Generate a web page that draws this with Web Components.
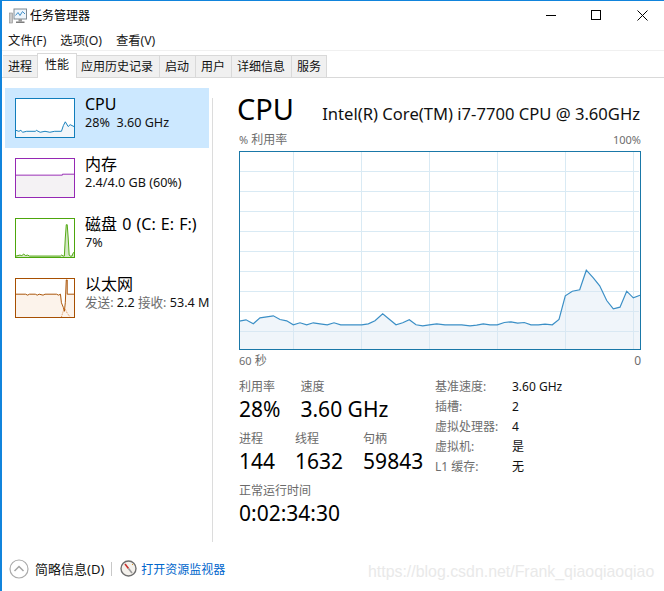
<!DOCTYPE html>
<html lang="zh">
<head>
<meta charset="utf-8">
<title>任务管理器</title>
<style>
  html, body { margin: 0; padding: 0; background: #fff; }
  body { font-family: "Noto Sans", "Noto Sans CJK SC", sans-serif; font-size: 12px; color: #000; overflow: hidden; }
</style>
</head>
<body>
<task-window>
  <win-titlebar slot="title">任务管理器</win-titlebar>
  <win-menu slot="menu"><span>文件(F)</span><span>选项(O)</span><span>查看(V)</span></win-menu>
  <win-tabs slot="tabs" active="1" items="进程,性能,应用历史记录,启动,用户,详细信息,服务"></win-tabs>
  <perf-side slot="side">
    <perf-item kind="cpu" selected name="CPU">28%&nbsp; 3.60 GHz</perf-item>
    <perf-item kind="mem" name="内存">2.4/4.0 GB (60%)</perf-item>
    <perf-item kind="disk" name="磁盘 0 (C: E: F:)">7%</perf-item>
    <perf-item kind="net" name="以太网"><span class="dim">发送:</span> 2.2 <span class="dim">接收:</span> 53.4 M</perf-item>
  </perf-side>
  <perf-panel slot="panel"></perf-panel>
  <win-footer slot="footer"></win-footer>
</task-window>

<script>
class TaskWindow extends HTMLElement {
    connectedCallback() {
        this.attachShadow({ mode: 'open' });
        this.shadowRoot.innerHTML = `
            <style>
                :host {
                    display: flex;
                    flex-direction: column;
                    width: 664px;
                    height: 591px;
                    box-sizing: border-box;
                    border-top: 1px solid #1184dc;
                    border-left: 2px solid #1184dc;
                    position: relative;
                    overflow: hidden;
                }
                .main { display: flex; height: 464px; flex: none; }
                .mark {
                    position: absolute;
                    left: 366px;
                    top: 561px;
                    font: 15.9px/20px "Liberation Sans", sans-serif;
                    color: #e9e9e9;
                    white-space: nowrap;
                }
            </style>
            <slot name="title"></slot>
            <slot name="menu"></slot>
            <slot name="tabs"></slot>
            <div class="main">
                <slot name="side"></slot>
                <slot name="panel"></slot>
            </div>
            <slot name="footer"></slot>
            <div class="mark">https://blog.csdn.net/Frank_qiaoqiaoqiao</div>
        `;
    }
}

class WinTitlebar extends HTMLElement {
    connectedCallback() {
        this.attachShadow({ mode: 'open' });
        this.shadowRoot.innerHTML = `
            <style>
                :host { display: flex; align-items: center; height: 29px; padding-left: 7px; flex: none; }
                .icon { width: 18px; height: 16px; margin-right: 3px; }
                .text { flex: 1; font-size: 12px; color: #000; position: relative; top: -1px; }
                .ctl { display: flex; margin-right: -1px; }
                .ctl div { width: 45.5px; height: 29px; display: flex; align-items: center; justify-content: center; }
            </style>
            <svg class="icon" viewBox="0 0 18 16">
                <rect x="0.5" y="5" width="3" height="10" fill="#c9c9c9" stroke="#8a8a8a" stroke-width=".6"/>
                <rect x="5" y="1" width="12.5" height="10" fill="#eef5fb" stroke="#7f8a92"/>
                <path d="M6.5 7.5 9 4.5 11 7.5 13.5 3.5 16 6" fill="none" stroke="#3f8fc9" stroke-width="1"/>
                <rect x="9.5" y="11" width="3.5" height="2.5" fill="#9a9a9a"/>
                <rect x="7" y="13.5" width="8.5" height="1.5" fill="#7d7d7d"/>
            </svg>
            <span class="text"><slot></slot></span>
            <div class="ctl">
                <div><svg width="11" height="11" viewBox="0 0 11 11"><path d="M0 5.5H10" stroke="#000" stroke-width="1"/></svg></div>
                <div><svg width="11" height="11" viewBox="0 0 11 11"><rect x=".5" y=".5" width="9" height="9" fill="none" stroke="#000"/></svg></div>
                <div><svg width="11" height="11" viewBox="0 0 11 11"><path d="M.5 .5 10.5 10.5M10.5 .5 .5 10.5" stroke="#000" stroke-width="1"/></svg></div>
            </div>
        `;
    }
}

class WinMenu extends HTMLElement {
    connectedCallback() {
        this.attachShadow({ mode: 'open' });
        this.shadowRoot.innerHTML = `
            <style>
                :host { display: flex; gap: 14px; height: 20px; padding-left: 6px; align-items: center; flex: none; border-bottom: 1px solid #f0f0f0; font-size: 12.3px; color: #1a1a1a; }
            </style>
            <slot></slot>
        `;
    }
}

class WinTabs extends HTMLElement {
    connectedCallback() {
        this.attachShadow({ mode: 'open' });
        const active = Number(this.getAttribute('active'));
        const tabs = this.getAttribute('items').split(',').map((t, i) =>
            `<div class="tab${i === active ? ' on' : ''}">${t}</div>`).join('');
        this.shadowRoot.innerHTML = `
            <style>
                :host { display: flex; height: 27px; box-sizing: border-box; padding: 3px 0 0 1px; border-bottom: 1px solid #d9d9d9; flex: none; }
                .tab {
                    height: 21px;
                    line-height: 21px;
                    margin-top: 1px;
                    padding: 0 6px 0 5px;
                    background: #f0f0f0;
                    border: 1px solid #d9d9d9;
                    border-bottom: none;
                    border-left: none;
                    font-size: 12px;
                    color: #111;
                    white-space: nowrap;
                }
                .tab:first-child { border-left: 1px solid #d9d9d9; padding: 0 2px 0 7px; }
                .tab:last-child { padding-right: 5px; }
                .on {
                    height: 24px;
                    margin: -1px -1px -1px -2px;
                    padding: 0 7px;
                    background: #fff;
                    border-left: 1px solid #d9d9d9;
                    position: relative;
                }
            </style>
            ${tabs}
        `;
    }
}

class PerfSide extends HTMLElement {
    connectedCallback() {
        this.attachShadow({ mode: 'open' });
        this.shadowRoot.innerHTML = `
            <style>
                :host { display: block; width: 210px; box-sizing: border-box; padding: 10px 0 0 3px; flex: none; }
            </style>
            <slot></slot>
        `;
    }
}

// thumbnail points are read off the reference at 3x, relative to a 60x40 box
const THUMBS = {
    cpu: { color: '#117dbb', fill: '#f1f6fa', pts: '0,33 3,34 5,33 7,35 11,34 20,34 21,33 25,35 30,34 35,35 40,34 47,34 49,28 51,24 54,29 56,27 60,29' },
    mem: { color: '#9528b4', fill: '#f4f2f4', pts: '0,17 48,17 48,16 60,16' },
    disk: { color: '#4da60c', fill: '#d5e8c6', pts: '0,39 4,38 6,38.5 8,37 10,38.5 12,38 14,39 46,39 47,38 49,39 50,39 51,20 52,6 53,6 54,20 55,38 56,39 58,39 59,36 60,35' },
    net: { color: '#a74f01', fill: '#fcf3eb', pts: '0,16 10,16 12,17 14,16 20,16 22,17 24,16 28,17 30,16 42,16 44,17 46,16 47,25 49,30 50,34 51,25 52,1 53,1 53,16 60,16' }
};

class PerfItem extends HTMLElement {
    connectedCallback() {
        this.attachShadow({ mode: 'open' });
        const kind = this.getAttribute('kind');
        const t = THUMBS[kind];
        const extra = kind === 'net'
            ? `<polyline points="47,40 50,30 53,36 56,40" fill="none" stroke="#d98a4a" stroke-width="1" stroke-dasharray="1 1"/>` : '';
        this.shadowRoot.innerHTML = `
            <style>
                :host { display: flex; width: 204px; height: 60px; box-sizing: border-box; padding: 10px 0 0 10px; white-space: nowrap; }
                :host([selected]) { background: #cce8ff; }
                .thumb { width: 60px; height: 40px; flex: none; box-sizing: border-box; border: 1px solid ${t.color}; background: #fff; }
                .thumb svg { display: block; }
                .text { margin-left: 10px; margin-top: -5px; }
                .name { font-size: 16px; line-height: 22px; color: #000; word-spacing: 1px; }
                .sub { font-size: 12.6px; line-height: 16px; color: #111; }
                ::slotted(.dim) { color: #6d6d6d; }
            </style>
            <div class="thumb">
                <svg width="58" height="38" viewBox="0 0 60 40" preserveAspectRatio="none">
                    <polygon points="${t.pts} 60,40 0,40" fill="${t.fill}"/>
                    <polyline points="${t.pts}" fill="none" stroke="${t.color}" stroke-width="1"/>
                    ${extra}
                </svg>
            </div>
            <div class="text">
                <div class="name">${this.getAttribute('name')}</div>
                <div class="sub"><slot></slot></div>
            </div>
        `;
    }
}

class PerfGraph extends HTMLElement {
    connectedCallback() {
        this.attachShadow({ mode: 'open' });
        // measured from the reference at 3x
        const left = [[28,212],[48,208],[70,220],[90,202],[110,199],[130,196],[150,207],[170,211],[190,223],[210,217],[230,223],[250,217],[270,220],[292,223],[312,217],[332,223],[352,223],[372,223],[395,223],[415,220],[435,211],[458,190],[478,206],[498,223],[518,217],[538,208],[558,223],[578,226],[598,223],[620,220]]
            .map(([x, y]) => [230 + x / 3, 250 + y / 3]);
        const right = [[0,223],[50,223],[75,226],[95,224],[115,220],[135,223],[157,223],[178,216],[198,214],[218,218],[238,216],[258,223],[280,223],[300,221],[322,223],[342,207],[361,136],[382,122],[404,118],[424,59],[445,82],[464,106],[485,150],[505,175],[525,170],[545,122],[565,142],[585,134]]
            .map(([x, y]) => [445 + x / 3, 250 + y / 3]);
        const pts = left.concat(right).map(([x, y]) => `${(x - 239).toFixed(1)},${(y - 151 + 0.5).toFixed(1)}`).join(' ');
        const vs = [54, 122, 190, 258, 326, 394].map(x => `<path d="M${x + .5} 1V198"/>`).join('');
        const hs = [20, 40, 60, 80, 100, 120, 140, 160, 180].map(y => `<path d="M1 ${y + .5}H400"/>`).join('');
        this.shadowRoot.innerHTML = `
            <style>
                :host { display: block; width: 402px; height: 199px; }
                svg { display: block; }
            </style>
            <svg width="402" height="199" viewBox="0 0 402 199">
                <rect width="402" height="199" fill="#fff"/>
                <g stroke="#d9eaf4" stroke-width="1" fill="none">${vs}${hs}</g>
                <polygon points="${pts} 401,198 1,198" fill="#d9e7f2" fill-opacity=".4"/>
                <polyline points="${pts}" fill="none" stroke="#3b8fc6" stroke-width="1.2"/>
                <rect x=".5" y=".5" width="401" height="198" fill="none" stroke="#1a78a8"/>
            </svg>
        `;
    }
}

class StatCell extends HTMLElement {
    connectedCallback() {
        this.attachShadow({ mode: 'open' });
        this.shadowRoot.innerHTML = `
            <style>
                :host { display: block; white-space: nowrap; }
                .l { font-size: 12px; line-height: 16px; color: #6a6a6a; }
                .v { font-size: 21px; line-height: 28px; color: #000; }
            </style>
            <div class="l">${this.getAttribute('label')}</div>
            <div class="v">${this.getAttribute('value')}</div>
        `;
    }
}

class PerfPanel extends HTMLElement {
    connectedCallback() {
        this.attachShadow({ mode: 'open' });
        this.shadowRoot.innerHTML = `
            <style>
                :host { display: block; flex: 1; box-sizing: border-box; margin-top: 20px; padding: 0 0 0 26px; border-left: 1px solid #dcdcdc; height: 444px; }
                .head { display: flex; align-items: baseline; justify-content: space-between; width: 403px; height: 34px; margin-left: -2px; margin-top: -6px; }
                .big { font-size: 29px; line-height: 34px; color: #000; }
                .cpu { font-size: 16.6px; line-height: 24px; color: #111; }
                .cap { display: flex; justify-content: space-between; width: 402px; height: 18px; margin-top: 5px; font-size: 12px; line-height: 18px; color: #6d6d6d; margin-bottom: 2px; }
                .foot { display: flex; justify-content: space-between; width: 402px; height: 20px; margin-top: 1px; font-size: 12px; line-height: 20px; color: #6d6d6d; }
                .n { font-size: 11px; }
                .stats { display: flex; margin-top: 8px; }
                .left { width: 196px; display: flex; flex-direction: column; gap: 8px; }
                .row { display: flex; gap: 20px; height: 44px; }
                .table { display: grid; grid-template-columns: 77px auto; grid-auto-rows: 20px; align-items: center; font-size: 12px; color: #111; margin-top: -3px; }
                .table .k { color: #6d6d6d; }
            </style>
            <div class="head"><span class="big">CPU</span><span class="cpu">Intel(R) Core(TM) i7-7700 CPU @ 3.60GHz</span></div>
            <div class="cap"><span><span class="n">%</span> 利用率</span><span class="n">100%</span></div>
            <perf-graph></perf-graph>
            <div class="foot"><span><span class="n">60</span> 秒</span><span>0</span></div>
            <div class="stats">
                <div class="left">
                    <div class="row">
                        <stat-cell label="利用率" value="28%"></stat-cell>
                        <stat-cell label="速度" value="3.60 GHz"></stat-cell>
                    </div>
                    <div class="row">
                        <stat-cell label="进程" value="144"></stat-cell>
                        <stat-cell label="线程" value="1632"></stat-cell>
                        <stat-cell label="句柄" value="59843"></stat-cell>
                    </div>
                    <stat-cell label="正常运行时间" value="0:02:34:30"></stat-cell>
                </div>
                <div class="table">
                    <span class="k">基准速度:</span><span>3.60 GHz</span>
                    <span class="k">插槽:</span><span>2</span>
                    <span class="k">虚拟处理器:</span><span>4</span>
                    <span class="k">虚拟机:</span><span>是</span>
                    <span class="k">L1 缓存:</span><span>无</span>
                </div>
            </div>
        `;
    }
}

class WinFooter extends HTMLElement {
    connectedCallback() {
        this.attachShadow({ mode: 'open' });
        this.shadowRoot.innerHTML = `
            <style>
                :host { display: flex; align-items: center; flex: 1; padding: 4px 0 0 7px; font-size: 12px; }
                .less { margin-left: 6px; color: #111; font-size: 13px; }
                .bar { width: 1px; height: 14px; background: #c8c8c8; margin: 0 8px 0 7px; }
                .link { color: #0066cc; margin-left: 4px; }
                svg { display: block; flex: none; }
            </style>
            <svg width="20" height="20" viewBox="0 0 20 20">
                <circle cx="10" cy="10" r="9" fill="#fff" stroke="#ababab" stroke-width="1.2"/>
                <path d="M5.5 12 10 7.5 14.5 12" fill="none" stroke="#a5a5a5" stroke-width="1.5"/>
            </svg>
            <span class="less">简略信息(D)</span>
            <span class="bar"></span>
            <svg width="17" height="17" viewBox="0 0 17 17">
                <circle cx="8.5" cy="8.5" r="7.5" fill="#f4f1ec" stroke="#6f6f6f" stroke-width="1.4"/>
                <path d="M5 4 8.5 8.5" stroke="#c9302c" stroke-width="1.6"/>
                <path d="M8.5 8.5 12 13" stroke="#9a9a9a" stroke-width="1.6"/>
                <path d="M12 5 13 4" stroke="#d8962a" stroke-width="1"/>
            </svg>
            <span class="link">打开资源监视器</span>
        `;
    }
}

customElements.define('task-window', TaskWindow);
customElements.define('win-titlebar', WinTitlebar);
customElements.define('win-menu', WinMenu);
customElements.define('win-tabs', WinTabs);
customElements.define('perf-side', PerfSide);
customElements.define('perf-item', PerfItem);
customElements.define('perf-graph', PerfGraph);
customElements.define('stat-cell', StatCell);
customElements.define('perf-panel', PerfPanel);
customElements.define('win-footer', WinFooter);
</script>
</body>
</html>
